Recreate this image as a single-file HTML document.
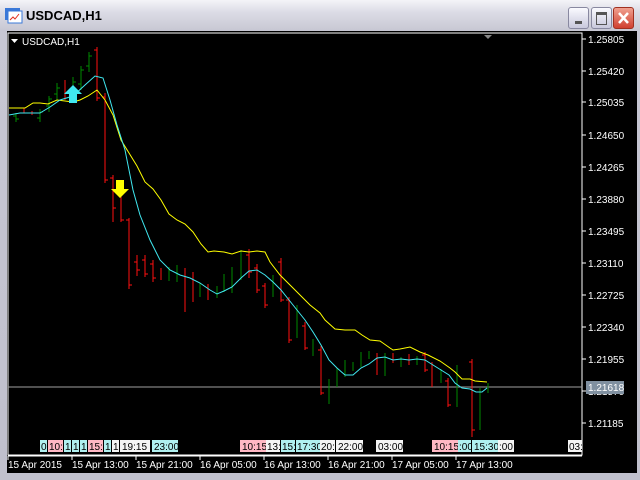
<!DOCTYPE html>
<html><head><meta charset="utf-8"><style>
body{margin:0;width:640px;height:480px;overflow:hidden;background:#d4d0c8;font-family:"Liberation Sans",sans-serif}
#win{position:absolute;left:0;top:0;width:640px;height:480px;background:linear-gradient(#f4f4f8,#dcdce6 12px,#c8c8d4 30px,#c0c0cc);}
#title{position:absolute;left:26px;top:8px;font:bold 13px "Liberation Sans",sans-serif;color:#000}
.btn{position:absolute;top:7px;width:19px;height:20px;border:1px solid #8888a0;border-radius:3px;background:linear-gradient(#fafaff,#c8c8dc)}
#chart{position:absolute;left:7px;top:31px;width:630px;height:442px;background:#000}
svg text{font-family:"Liberation Sans",sans-serif;font-size:10px}
</style></head><body>
<div id="win">
<svg style="position:absolute;left:5px;top:8px" width="18" height="16"><rect x="0" y="0" width="15" height="12" fill="#3a78d8"/><rect x="3" y="3" width="14" height="12" fill="#fff" stroke="#3a78d8"/><polyline points="5,12 8,9 10,11 14,6" stroke="#e03020" fill="none"/></svg>
<div id="title">USDCAD,H1</div>
<div class="btn" style="left:568px"><div style="position:absolute;left:6px;top:13px;width:7px;height:3px;background:#555"></div></div>
<div class="btn" style="left:591px"><div style="position:absolute;left:4px;top:4px;width:9px;height:9px;border:1.5px solid #555;border-top-width:3px"></div></div>
<div class="btn" style="left:613px;background:linear-gradient(#f0a090,#d04030);border-color:#a03020"><svg width="19" height="20"><path d="M5 5L14 15M14 5L5 15" stroke="#fff" stroke-width="2.5"/></svg></div>
<div id="chart"></div>
<svg style="position:absolute;left:0;top:0" width="640" height="480">
<rect x="8" y="33" width="574" height="422" fill="none" stroke="#fff" stroke-width="1"/>
<text x="22" y="45" fill="#fff">USDCAD,H1</text>
<path d="M11 39h7l-3.5 4z" fill="#fff"/>
<path d="M484 35h8l-4 4z" fill="#888"/>
<g stroke="#fff">
<path d="M582 39h4M582 71h4M582 102h4M582 135h4M582 167h4M582 199h4M582 231h4M582 263h4M582 295h4M582 327h4M582 359h4M582 391h4M582 423h4"/>
<path d="M8 456h574M8 456v4M72 456v4M136 456v4M200 456v4M264 456v4M328 456v4M392 456v4M456 456v4"/>
</g>
<g fill="#fff">
<text x="588" y="43">1.25805</text><text x="588" y="75">1.25420</text><text x="588" y="106">1.25035</text><text x="588" y="139">1.24650</text><text x="588" y="171">1.24265</text><text x="588" y="203">1.23880</text><text x="588" y="235">1.23495</text><text x="588" y="267">1.23110</text><text x="588" y="299">1.22725</text><text x="588" y="331">1.22340</text><text x="588" y="363">1.21955</text><text x="588" y="395">1.21570</text><text x="588" y="427">1.21185</text>
<text x="8" y="468">15 Apr 2015</text><text x="72" y="468">15 Apr 13:00</text><text x="136" y="468">15 Apr 21:00</text><text x="200" y="468">16 Apr 05:00</text><text x="264" y="468">16 Apr 13:00</text><text x="328" y="468">16 Apr 21:00</text><text x="392" y="468">17 Apr 05:00</text><text x="456" y="468">17 Apr 13:00</text>
</g>
<line x1="8" y1="387" x2="582" y2="387" stroke="#a0a0a0"/>
<rect x="586" y="381" width="38" height="13" fill="#8090a0"/>
<text x="588" y="391" fill="#fff">1.21618</text>
<g stroke="#008a00" stroke-width="1">
<path d="M16 113v9M13 116h3M16 119h3M40 109v13M37 118h3M40 112h3M49 96v16M46 106h3M49 99h3M57 83v17M54 94h3M57 88h3M73 77v21M70 92h3M73 82h3M81 66v24M78 84h3M81 70h3M89 52v20M86 66h3M89 56h3"/>
<path d="M169 267v14M177 265v17M200 283v14M217 286v12M224 274v18M232 267v26M241 250v30M273 275v22M297 305v33M313 339v17M329 379v25M337 368v19M345 360v17M353 362v9M361 352v15M369 351v8M385 353v23M401 357v10M417 356v9M441 369v14M457 365v42M480 388v42M488 383v10"/>
</g>
<g stroke="#ff1010" stroke-width="1">
<path d="M24 108v5M32 111v4M65 80v20M97 47v54M105 93v90M113 175v47M121 185v37M129 218v71M137 255v21M145 255v22M153 260v22M161 268v12M185 268v44M193 272v30M208 284v16M249 249v29M257 264v29M265 283v25M281 258v44M289 297v46M305 322v28M321 346v49M377 353v22M393 353v10M409 354v11M425 352v20M432 362v25M448 378v29M472 359v78"/>
<path d="M94 50h3M97 98h3M102 97h3M105 180h3M110 178h3M113 208h3M118 190h3M121 220h3M126 220h3M129 285h3M134 262h3M137 270h3M142 260h3M145 274h3M150 264h3M153 278h3M246 255h3M249 272h3M254 268h3M257 290h3M262 286h3M265 305h3M278 262h3M281 300h3M286 300h3M289 340h3M302 326h3M305 348h3M318 350h3M321 393h3M422 355h3M425 370h3M445 381h3M448 405h3M469 362h3M472 430h3"/>
</g>
<polyline fill="none" stroke="#ffff00" stroke-width="1" points="9,108 25,108 33,103 40,103 48,104 57,100 65,101 73,102 80,100 88,96 97,90 105,100 113,115 121,140 129,153 137,166 145,182 153,189 161,200 169,214 177,220 185,224 193,232 201,244 208,252 214,251 224,252 232,254 241,251 249,252 257,251 265,252 270,262 280,275 290,285 300,295 310,305 320,313 325,320 335,329 345,330 355,330 362,335 370,340 380,341 390,348 393,350 400,349 410,347 420,352 428,355 440,361 450,368 455,372 462,379 470,379 475,381 487,382"/>
<polyline fill="none" stroke="#40e8f0" stroke-width="1" points="9,115 20,113 40,113 50,107 60,100 73,96 85,85 95,76 103,78 110,100 117,125 125,150 133,190 140,215 150,240 160,260 170,270 180,275 190,278 200,283 210,290 217,294 224,291 232,287 241,278 249,271 257,270 265,275 273,282 281,290 289,300 297,310 305,320 313,332 321,345 329,360 337,368 345,375 353,375 361,368 369,364 377,358 385,357 393,360 401,359 409,360 417,359 425,360 433,365 441,370 449,375 455,383 462,388 470,389 476,392 482,392 487,388"/>
<path d="M73 85l-9 9h5v9h8v-9h5z" fill="#40e8f0"/>
<path d="M120 198l-9-9h5v-9h8v9h5z" fill="#ffff00"/>
<g font-size="9">
<rect x="40" y="440" width="7" height="12" fill="#b0f0f0"/><text x="41" y="450">0</text>
<rect x="48" y="440" width="15" height="12" fill="#ffb8c4"/><text x="49" y="450">10:</text>
<rect x="64" y="440" width="7" height="12" fill="#b0f0f0"/><rect x="72" y="440" width="7" height="12" fill="#b0f0f0"/><rect x="80" y="440" width="7" height="12" fill="#b0f0f0"/>
<text x="65" y="450">1</text><text x="73" y="450">1</text><text x="81" y="450">1</text>
<rect x="88" y="440" width="15" height="12" fill="#ffb8c4"/><text x="89" y="450">15:</text>
<rect x="104" y="440" width="7" height="12" fill="#b0f0f0"/><text x="105" y="450">1</text>
<rect x="112" y="440" width="7" height="12" fill="#f4f4f4"/><text x="113" y="450">1</text>
<rect x="120" y="440" width="30" height="12" fill="#f4f4f4"/><text x="122" y="450">19:15</text>
<rect x="152" y="440" width="26" height="12" fill="#b0f0f0"/><text x="154" y="450">23:00</text>
<rect x="240" y="440" width="26" height="12" fill="#ffb8c4"/><text x="242" y="450">10:15</text>
<rect x="266" y="440" width="14" height="12" fill="#f4f4f4"/><text x="267" y="450">13:</text>
<rect x="281" y="440" width="14" height="12" fill="#b0f0f0"/><text x="282" y="450">15:</text>
<rect x="296" y="440" width="24" height="12" fill="#b0f0f0"/><text x="297" y="450">17:30</text>
<rect x="320" y="440" width="15" height="12" fill="#f4f4f4"/><text x="321" y="450">20:</text>
<rect x="336" y="440" width="27" height="12" fill="#f4f4f4"/><text x="338" y="450">22:00</text>
<rect x="376" y="440" width="27" height="12" fill="#f4f4f4"/><text x="378" y="450">03:00</text>
<rect x="432" y="440" width="26" height="12" fill="#ffb8c4"/><text x="434" y="450">10:15</text>
<rect x="458" y="440" width="13" height="12" fill="#b0f0f0"/><text x="459" y="450">:00</text>
<rect x="472" y="440" width="26" height="12" fill="#b0f0f0"/><text x="474" y="450">15:30</text>
<rect x="498" y="440" width="16" height="12" fill="#f4f4f4"/><text x="499" y="450">:00</text>
<rect x="568" y="440" width="14" height="12" fill="#f4f4f4"/><text x="569" y="450">03:</text>
</g>
</svg>
</div>
</body></html>
